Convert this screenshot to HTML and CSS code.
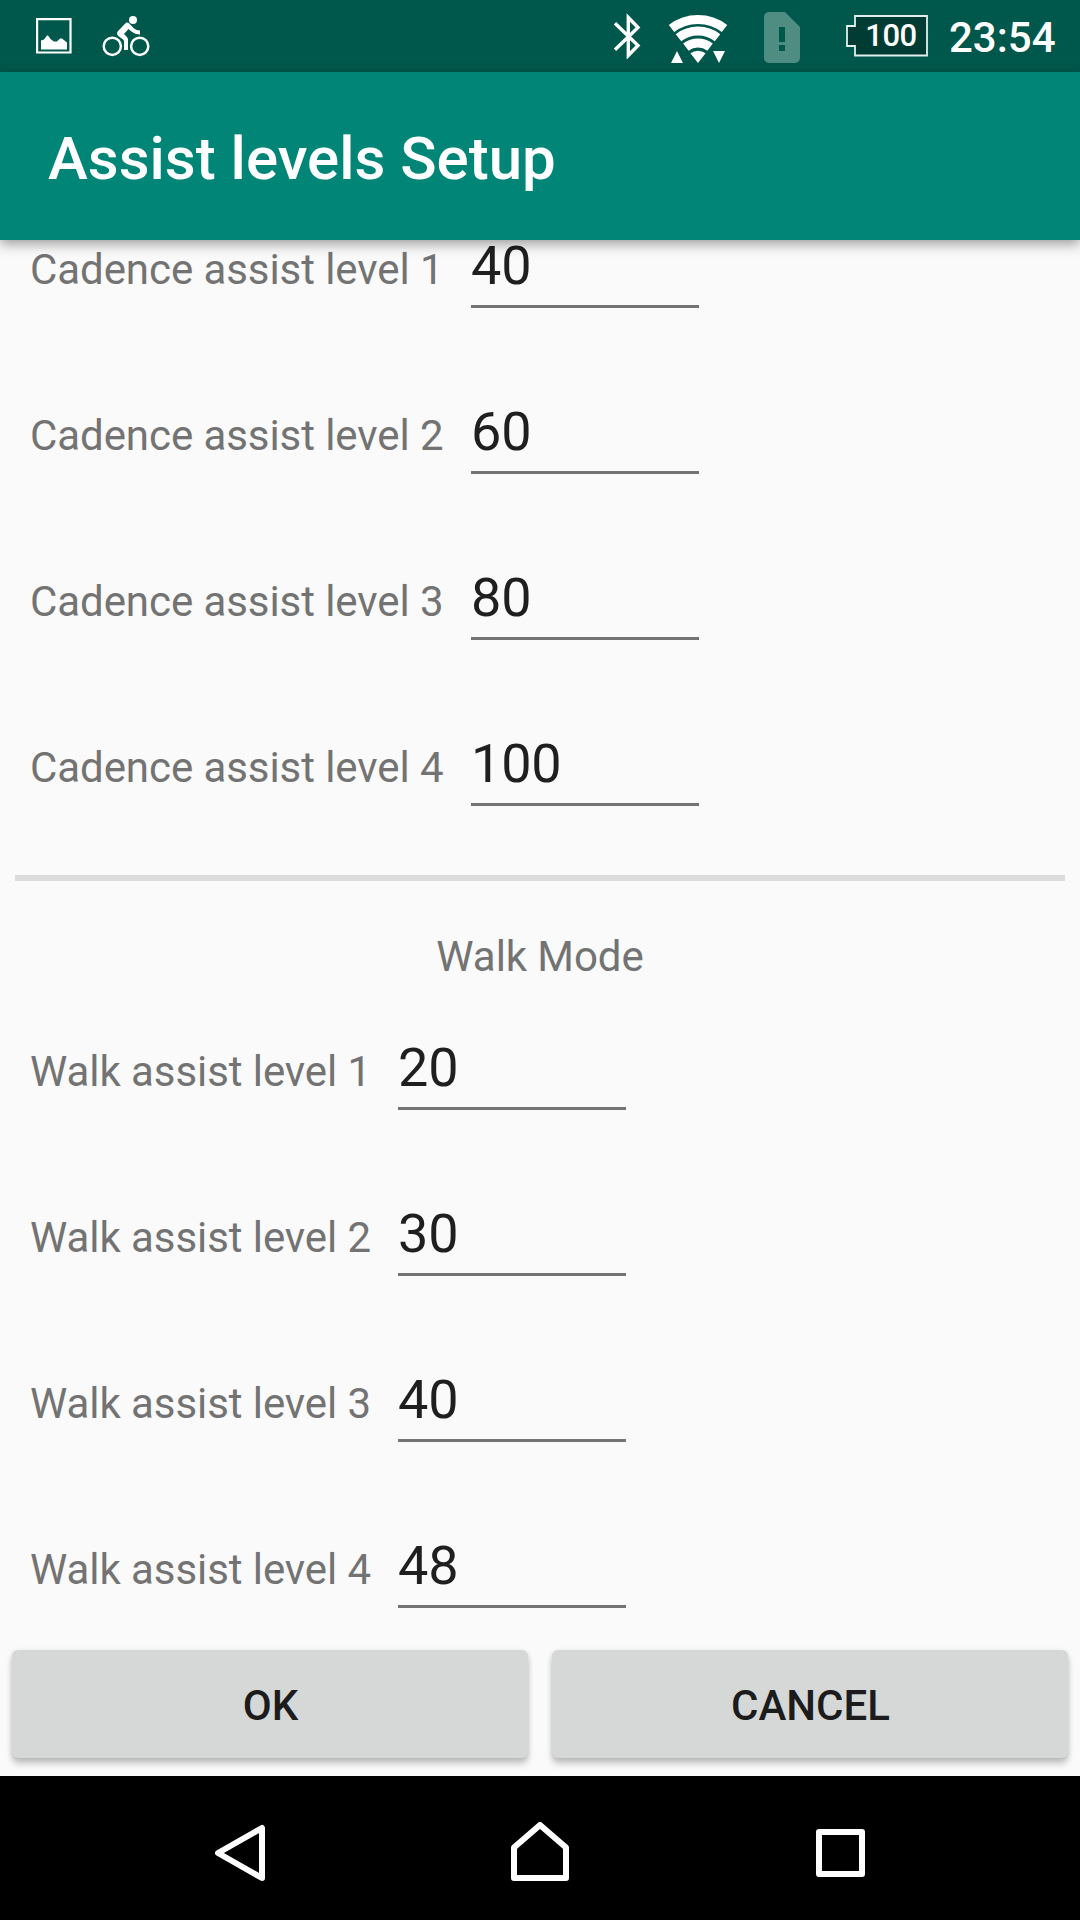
FILE: index.html
```html
<!DOCTYPE html>
<html lang="en">
<head>
<meta charset="utf-8">
<title>Assist levels Setup</title>
<link rel="stylesheet" href="styles.css">
</head>
<body>
<div class="screen">
  <div class="status-bar">
    <svg class="icon-picture" width="36" height="36" viewBox="0 0 36 36"><path d="M1.1 1.1h33.4v33.4H1.1z" fill="none" stroke="#fff" stroke-width="2.2"/><path d="M5 22l3-1 3-4h1l3 4 3 2h3l3-3h2l5 4v7H5z" transform="translate(0 .5)" fill="#fff"/></svg>
    <svg class="icon-bike" width="48" height="42" viewBox="102 15 48 42"><g fill="none" stroke="#fff" stroke-width="2.5"><circle cx="112.3" cy="46.3" r="8.6"/><circle cx="139.7" cy="46.3" r="8.6"/></g><circle cx="133" cy="20" r="4" fill="#fff"/><path d="M126 22.7q2-.4 3.5 1l4.500 4.800q2.500 2 6 2v4q-5 0-8.500-3l-3-2.500-4.500 5 2.500 2.500q1.500 1.500 1.500 3V50h-4V41.500q0-1-1-2l-5-3.700q-2-2.800.3-5z" fill="#fff"/></svg>
    <svg class="icon-bluetooth" width="28" height="46" viewBox="613 13 28 46"><path d="M615 23.300l23 22.200-9.700 10V17.500l9.700 10L615 49.700" fill="none" stroke="#fff" stroke-width="3.400"/></svg>
    <svg class="icon-wifi" width="60" height="50" viewBox="668 14 60 50"><g fill="none" stroke="#fff" stroke-width="9"><path d="M671.500 28.500A43.500 43.500 0 0 1 724.500 28.500"/><path d="M678.500 37.700A32 32 0 0 1 717.500 37.700"/><path d="M685.900 47.200A20 20 0 0 1 710.100 47.200"/></g><path d="M690.400 53.300a12.500 12.500 0 0 1 15.200 0L698 63zM671 63l6-12 6 12zM713 51h12l-6 12z" fill="#fff"/></svg>
    <svg class="icon-sim" width="36" height="51" viewBox="0 0 36 51"><path fill="#4f8c82" fill-rule="evenodd" d="M5 0h16l15 15v31a5 5 0 0 1-5 5H5a5 5 0 0 1-5-5V5a5 5 0 0 1 5-5zM15 15v15h6V15zM15 33v6h6v-6z"/></svg>
    <div class="battery">
      <svg class="battery-shape" width="82" height="42" viewBox="0 0 82 42"><path d="M9 1h72v39.500H9V31H1V11h8z" fill="#003c34" stroke="#e4eeec" stroke-width="1.800"/></svg>
      <span class="battery-level">100</span>
    </div>
    <span class="clock">23:54</span>
  </div>
  <header class="app-bar"><h1 class="title">Assist levels Setup</h1></header>
  <main class="content">
    <section class="levels cadence">
      <div class="row"><span class="label">Cadence assist level 1</span><span class="value">40</span></div>
      <div class="row"><span class="label">Cadence assist level 2</span><span class="value">60</span></div>
      <div class="row"><span class="label">Cadence assist level 3</span><span class="value">80</span></div>
      <div class="row"><span class="label">Cadence assist level 4</span><span class="value">100</span></div>
    </section>
    <div class="divider"></div>
    <h2 class="section-title">Walk Mode</h2>
    <section class="levels walk">
      <div class="row"><span class="label">Walk assist level 1</span><span class="value">20</span></div>
      <div class="row"><span class="label">Walk assist level 2</span><span class="value">30</span></div>
      <div class="row"><span class="label">Walk assist level 3</span><span class="value">40</span></div>
      <div class="row"><span class="label">Walk assist level 4</span><span class="value">48</span></div>
    </section>
  </main>
  <div class="actions">
    <button class="button">OK</button>
    <button class="button">CANCEL</button>
  </div>
  <nav class="nav-bar">
    <svg width="60" height="60" viewBox="210 1822 60 60"><path d="M262 1828v50l-44-25z"/></svg>
    <svg width="60" height="60" viewBox="510 1822 60 60"><path d="M540 1825l26 22.500V1878h-52v-30.500z"/></svg>
    <svg width="60" height="60" viewBox="810 1822 60 60"><path d="M819 1832h43v42h-43z"/></svg>
  </nav>
</div>
</body>
</html>
```

FILE: styles.css
```css
* { box-sizing: border-box; }

body {
  margin: 0;
  font-family: Roboto, sans-serif;
  background: #fafafa;
}

.screen {
  display: flex;
  flex-direction: column;
  width: 1080px;
  height: 1920px;
  overflow: hidden;
}

svg { display: block; flex: none; }

/* Status bar */
.status-bar {
  display: flex;
  align-items: flex-start;
  height: 72px;
  flex: none;
  background: #00574b;
  color: #fff;
}
.icon-picture { margin: 18px 0 0 36px; }
.icon-bike { margin: 15px 0 0 30px; }
.icon-bluetooth { margin: 13px 0 0 463px; }
.icon-wifi { margin: 14px 0 0 27px; }
.icon-sim { margin: 12px 0 0 36px; }
.battery {
  display: grid;
  width: 82px;
  height: 42px;
  margin: 15px 0 0 46px;
}
.battery-shape, .battery-level { grid-area: 1 / 1; }
.battery-level {
  padding-left: 8px;
  text-align: center;
  font-size: 31px;
  font-weight: 500;
  line-height: 42px;
  letter-spacing: -.4px;
}
.clock {
  margin: 13px 0 0 21px;
  font-size: 42px;
  font-weight: 500;
  line-height: 50px;
}

/* App bar */
.app-bar {
  display: flex;
  align-items: center;
  height: 168px;
  flex: none;
  padding: 6px 48px 0;
  background: #008577;
  color: #fff;
  box-shadow: 0 4px 12px rgba(0, 0, 0, .38);
  z-index: 1;
}
.title {
  margin: 0;
  font-size: 60px;
  font-weight: 500;
  line-height: 72px;
}

/* Assist level list */
.content {
  flex: none;
  height: 1404px;
}
.levels {
  display: flex;
  flex-direction: column;
  gap: 92px;
  padding-left: 30px;
}
.cadence { margin-top: -6px; }
.row {
  display: grid;
  align-items: baseline;
  height: 74px;
}
.cadence .row { grid-template-columns: 441px 228px; }
.walk .row { grid-template-columns: 368px 228px; }
.label {
  font-size: 42px;
  line-height: 50px;
  letter-spacing: -.07px;
  color: #737373;
}
.value {
  height: 74px;
  border-bottom: 3px solid #737373;
  font-size: 54px;
  line-height: 64px;
  letter-spacing: -.2px;
  color: #1f1f1f;
}
.divider {
  height: 6px;
  margin: 69px 15px 0;
  background: #dcdcdc;
}
.section-title {
  margin: 51px 0 65px;
  text-align: center;
  font-size: 42px;
  font-weight: 400;
  line-height: 50px;
  letter-spacing: -.07px;
  color: #737373;
}
.walk { margin-top: -11px; }

/* Buttons */
.actions {
  display: grid;
  grid-template-columns: 1fr 1fr;
  gap: 24px;
  height: 132px;
  flex: none;
  padding: 6px 12px 18px;
}
.button {
  border: 0;
  border-radius: 6px;
  padding: 4px 0 0 1px;
  background: #d6d8d7;
  box-shadow: 0 6px 6px rgba(0, 0, 0, .2), 0 1px 5px rgba(0, 0, 0, .12);
  font: 500 42px/50px Roboto, sans-serif;
  color: #1c1c1c;
}

/* Navigation bar */
.nav-bar {
  display: flex;
  justify-content: center;
  gap: 240px;
  height: 144px;
  flex: none;
  padding-top: 46px;
  background: #000;
}
.nav-bar path {
  fill: none;
  stroke: #fff;
  stroke-width: 6;
  stroke-linejoin: round;
}
```
